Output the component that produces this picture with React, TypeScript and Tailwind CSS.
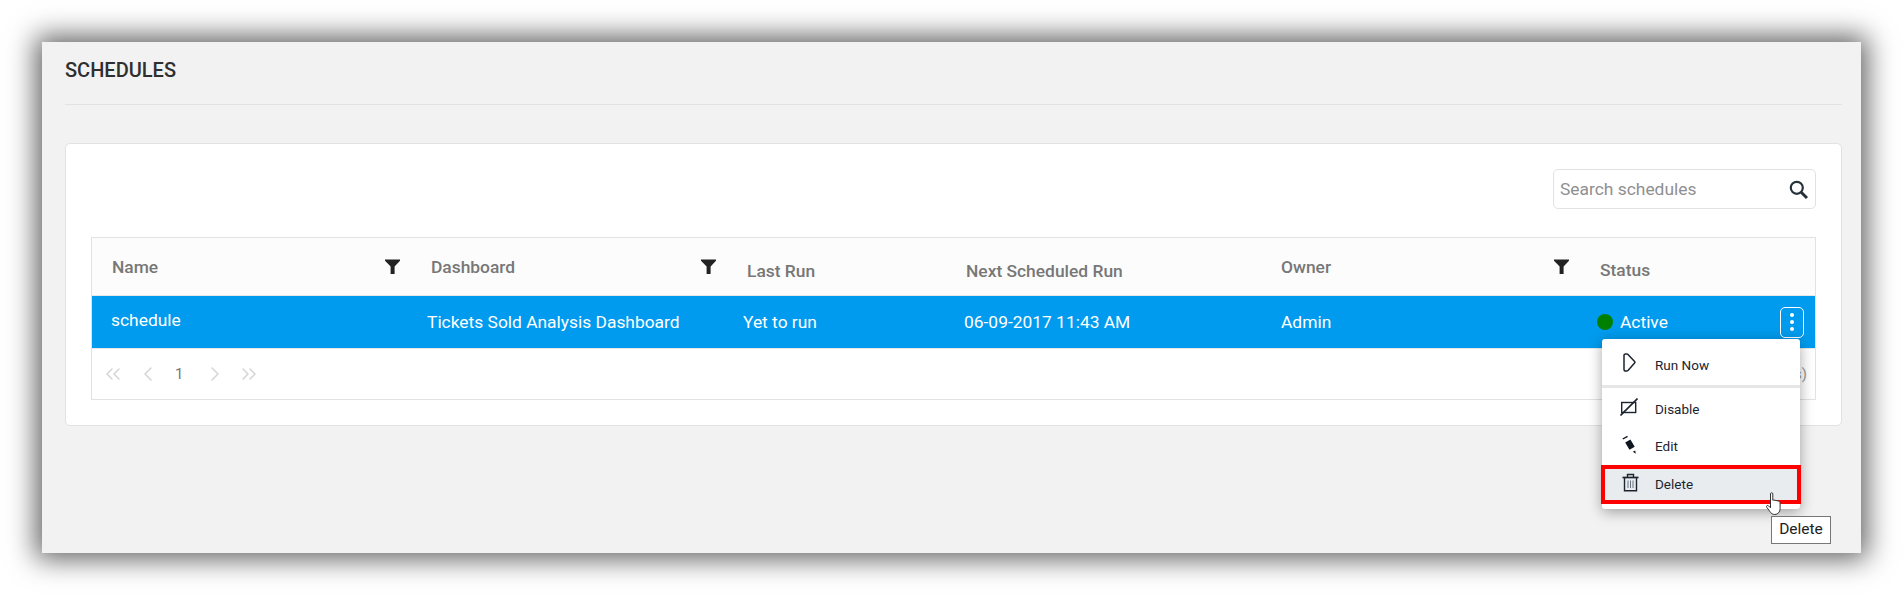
import React from 'react';
import { ChevronLeft, ChevronRight, ChevronsLeft, ChevronsRight } from 'lucide-react';

const Funnel = () => (
  <svg width="15" height="15" viewBox="0 0 15 15" className="text-[#222]">
    <path d="M0 0.5h15v1.2L9.6 7.6V15H5.6V7.6L0 1.7z" fill="currentColor" />
  </svg>
);

const SearchIcon = () => (
  <svg width="19" height="19" viewBox="0 0 19 19" fill="none" stroke="#263238" strokeWidth="2.2">
    <circle cx="7.8" cy="7.8" r="6" />
    <path d="M12.2 12.2L18 18" strokeWidth="3" />
  </svg>
);

const PlayIcon = () => (
  <svg width="13" height="19" viewBox="0 0 13 19" fill="none" stroke="#1c2430" strokeWidth="1.5" strokeLinejoin="round">
    <path d="M2.6 1h1.2c.5 0 .9.2 1.2.6l6.6 7c.4.4.4 1 0 1.4L5 17.4c-.3.4-.7.6-1.2.6H2.6C1.6 18 1 17.4 1 16.6V2.4C1 1.6 1.6 1 2.6 1z" />
  </svg>
);

const DisableIcon = () => (
  <svg width="18" height="18" viewBox="0 0 18 18" fill="none" stroke="#1c2430" strokeWidth="1.4">
    <rect x="1.7" y="4.5" width="14" height="10" />
    <path d="M0.5 17.5L17.5 0.5" strokeWidth="1.6" />
  </svg>
);

const EditIcon = () => (
  <svg width="15" height="19" viewBox="0 0 15 19" fill="#10161f">
    <path d="M3.2 7.6L8.4 4.6l4.3 7.2-5.2 3z" />
    <path d="M0.4 3.4L5.2.7l.7 1.2-4.8 2.7z" />
    <path d="M10.8 16.8l2.4-1.4.6 3.4z" />
  </svg>
);

const TrashIcon = () => (
  <svg width="17" height="19" viewBox="0 0 17 19" fill="none" stroke="#1c2430" strokeWidth="1.4">
    <path d="M0.5 4.5h16" strokeWidth="1.7" />
    <path d="M5.5 4V1.5h6V4" />
    <path d="M2.5 4.5v13.2h12V4.5" />
    <path d="M6 7.5v7.5M8.5 7.5v7.5M11 7.5v7.5" strokeWidth="1" stroke="#6b7480" />
  </svg>
);

const HandCursor = () => (
  <svg width="20" height="24" viewBox="0 0 20 24" fill="#fff" stroke="#333" strokeWidth="1" strokeLinejoin="round">
    <path d="M4.5 1.8c0-1.4 2.3-1.4 2.3 0v6.4l1-.2 4.6 1c1.2.3 1.7 1 1.7 2.2v5.5c0 3-2 5.8-5.2 5.8-2.6 0-3.8-1.2-5-3L.7 15.2c-.8-1.2.7-2.4 1.8-1.4l2 2z" />
  </svg>
);

const headers = [
  { label: 'Name', width: 'w-[319px]', text: 'pl-[20px] pt-[16px]', filter: true },
  { label: 'Dashboard', width: 'w-[316px]', text: 'pl-[20px] pt-[16px]', filter: true },
  { label: 'Last Run', width: 'w-[219px]', text: 'pl-[20px] pt-[20px]', filter: false },
  { label: 'Next Scheduled Run', width: 'w-[315px]', text: 'pl-[20px] pt-[20px]', filter: false },
  { label: 'Owner', width: 'w-[319px]', text: 'pl-[20px] pt-[16px]', filter: true },
  { label: 'Status', width: 'flex-1', text: 'pl-[20px] pt-[19px]', filter: false },
];

const cells = [
  { label: 'schedule', width: 'w-[319px]', text: 'pl-[19px] pb-[4px]' },
  { label: 'Tickets Sold Analysis Dashboard', width: 'w-[316px]', text: 'pl-[16px]' },
  { label: 'Yet to run', width: 'w-[219px]', text: 'pl-[16px]' },
  { label: '06-09-2017 11:43 AM', width: 'w-[315px]', text: 'pl-[18px]' },
  { label: 'Admin', width: 'w-[319px]', text: 'pl-[20px]' },
];

const MenuItem = ({ icon, label, className }: { icon: React.ReactNode; label: string; className: string }) => (
  <div className={`flex items-center text-[13.5px] text-[#1c2430] ${className}`}>
    <span className="flex w-[53px] shrink-0 justify-center pl-[1px] pb-[5px]">{icon}</span>
    <span>{label}</span>
  </div>
);

export default function App() {
  return (
    <div className="h-[595px] w-full overflow-hidden bg-white pl-[42px] pt-[42px] font-['Roboto',sans-serif]">
      <div className="relative h-[511px] w-[1819px] bg-[#f2f2f2] pl-[23px] pr-[19px] shadow-[0_0_26px_6px_rgba(0,0,0,0.62)]">
        <div className="h-[63px] border-b border-[#e2e2e2] pt-[13px] text-[20px] font-medium text-[#2f2f2f]">SCHEDULES</div>

        <div className="mt-[38px] h-[283px] rounded-[5px] border border-[#e2e2e2] bg-white pl-[25px] pr-[25px] pt-[25px]">
          {/* search */}
          <div className="flex justify-end">
            <div className="flex h-[40px] w-[263px] items-center justify-between rounded-[5px] border border-[#e2e2e2] pl-[6px] pr-[7px]">
              <input
                placeholder="Search schedules"
                className="w-[200px] bg-transparent text-[17.4px] outline-none placeholder:text-[#8f8f8f]"
              />
              <SearchIcon />
            </div>
          </div>

          {/* table */}
          <div className="mt-[28px] border border-[#e2e2e2]">
            <div className="flex h-[58px] border-b border-[#e8e8e8] bg-[#fcfcfc] text-[17.4px] font-medium text-[#777]">
              {headers.map((h) => (
                <div key={h.label} className={`flex justify-between ${h.width} ${h.text}`}>
                  <span>{h.label}</span>
                  {h.filter && (
                    <span className="pr-[11px] pt-[5px]">
                      <Funnel />
                    </span>
                  )}
                </div>
              ))}
            </div>
            <div className="flex h-[52px] items-center bg-[#009bee] text-[17.4px] text-white">
              {cells.map((c) => (
                <div key={c.label} className={`${c.width} ${c.text}`}>
                  {c.label}
                </div>
              ))}
              <div className="flex flex-1 items-center pl-[17px]">
                <span className="h-[16px] w-[16px] rounded-full bg-[#008000]" />
                <span className="ml-[7px]">Active</span>
                <span className="ml-auto mr-[11px] flex h-[31px] w-[24px] flex-col items-center justify-center gap-[3px] rounded-[5px] border border-white">
                  <i className="h-[4px] w-[4px] rounded-full bg-white" />
                  <i className="h-[4px] w-[4px] rounded-full bg-white" />
                  <i className="h-[4px] w-[4px] rounded-full bg-white" />
                </span>
              </div>
            </div>
            {/* pager */}
            <div className="flex h-[51px] items-center justify-between border-t border-[#e8e8e8] pl-[9px] pr-[8px] text-[#999]">
              <div className="flex items-center text-[#d6d6d6]">
                <ChevronsLeft size={24} strokeWidth={1.6} />
                <ChevronLeft size={24} strokeWidth={1.6} className="ml-[11px]" />
                <span className="ml-[15px] text-[15px] text-[#777]">1</span>
                <ChevronRight size={24} strokeWidth={1.6} className="ml-[20px]" />
                <ChevronsRight size={24} strokeWidth={1.6} className="ml-[10px]" />
              </div>
              <span className="text-[15px]">s)</span>
            </div>
          </div>
        </div>

        {/* row menu */}
        <div className="absolute left-[1560px] top-[297px] w-[198px] rounded-[3px] bg-white pb-[5px] shadow-[0_3px_14px_rgba(0,0,0,0.35)]">
          <MenuItem icon={<PlayIcon />} label="Run Now" className="h-[46px] pt-[6px]" />
          <div className="h-[3px] bg-[#e6e6e6]" />
          <div className="pt-[2px]">
            <MenuItem icon={<DisableIcon />} label="Disable" className="h-[38px]" />
            <MenuItem icon={<EditIcon />} label="Edit" className="h-[37px]" />
            <MenuItem
              icon={<TrashIcon />}
              label="Delete"
              className="-mx-px h-[39px] border-[4px] border-[#ff0000] bg-[#e8ecef] [&>span:first-child]:w-[50px]"
            />
          </div>
        </div>

        {/* pointer + tooltip */}
        <div className="absolute left-[1724px] top-[450px]">
          <HandCursor />
        </div>
        <div className="absolute left-[1729px] top-[474px] flex h-[28px] w-[60px] items-center justify-center border border-[#777] bg-white text-[15.5px] text-[#222]">
          Delete
        </div>
      </div>
    </div>
  );
}
